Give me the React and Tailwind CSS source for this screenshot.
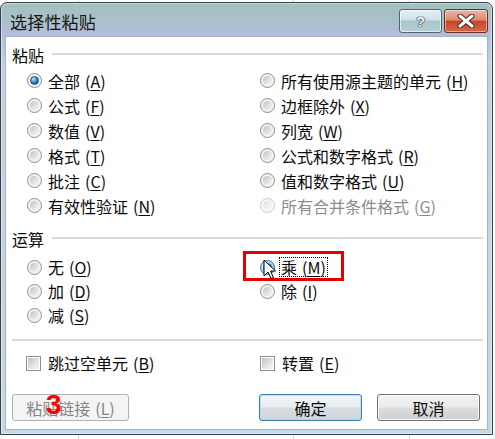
import React from "react";

function Radio({ state = "off" }) {
  if (state === "on") {
    return (
      <span className="w-[15px] h-[15px] shrink-0 rounded-full border border-[#8a8a8a] bg-[#f4f4f4] flex items-center justify-center">
        <span className="w-[9px] h-[9px] rounded-full bg-[radial-gradient(circle_at_35%_30%,#c9ecff_0%,#3d9ae0_40%,#1a5f9e_75%,#0c3760_100%)] border border-[#1d4f7e]" />
      </span>
    );
  }
  if (state === "hover") {
    return (
      <span className="w-[15px] h-[15px] shrink-0 rounded-full border border-[#2b6ea6] bg-[radial-gradient(circle_at_40%_35%,#eaf6ff_0%,#a9d6f3_55%,#4b93c9_100%)] flex items-center justify-center">
        <span className="w-[9px] h-[9px] rounded-full bg-[radial-gradient(circle_at_35%_30%,#8fc6ec_0%,#2d6fa6_55%,#163f66_100%)]" />
      </span>
    );
  }
  if (state === "disabled") {
    return (
      <span className="w-[15px] h-[15px] shrink-0 rounded-full border border-[#c9c9c9] bg-[#f8f8f8] flex items-center justify-center">
        <span className="w-[9px] h-[9px] rounded-full bg-[linear-gradient(135deg,#e2e2e2_0%,#fafafa_100%)]" />
      </span>
    );
  }
  return (
    <span className="w-[15px] h-[15px] shrink-0 rounded-full border border-[#8f8f8f] bg-[#f2f2f2] flex items-center justify-center">
      <span className="w-[9px] h-[9px] rounded-full bg-[linear-gradient(135deg,#bfbfbf_0%,#dcdcdc_45%,#f8f8f8_100%)]" />
    </span>
  );
}

function Check() {
  return (
    <span className="w-[15px] h-[15px] shrink-0 border border-[#8e8f8f] bg-white flex items-center justify-center">
      <span className="w-[11px] h-[11px] bg-[linear-gradient(135deg,#bcc0c6_0%,#dcdde0_45%,#f7f7f7_100%)]" />
    </span>
  );
}

function Key({ k, dim }) {
  return (
    <span className={dim ? "ml-[5px] text-[#8c8c8c]" : "ml-[5px]"}>
      (<span className="underline underline-offset-[2px] decoration-1">{k}</span>)
    </span>
  );
}

function RadioItem({ label, k, state = "off", focus }) {
  const dim = state === "disabled";
  return (
    <div className="flex items-center">
      <Radio state={state} />
      <span
        className={
          focus
            ? "ml-[6px] leading-[16px] outline-1 outline-dotted outline-black outline-offset-[1px] whitespace-nowrap"
            : dim
            ? "ml-[6px] leading-[16px] text-[#8c8c8c] whitespace-nowrap"
            : "ml-[6px] leading-[16px] whitespace-nowrap"
        }
      >
        {label}
        <Key k={k} dim={dim} />
      </span>
    </div>
  );
}

function CheckItem({ label, k }) {
  return (
    <div className="flex items-center">
      <Check />
      <span className="ml-[7px] leading-[16px] whitespace-nowrap">
        {label}
        <Key k={k} />
      </span>
    </div>
  );
}

function Header({ label }) {
  return (
    <div className="flex items-center h-[16px]">
      <span className="leading-[16px]">{label}</span>
      <span className="flex-1 h-[2px] bg-[#dadada] ml-[8px] mt-[-2px]" />
    </div>
  );
}

export default function App() {
  return (
    <div className="w-[495px] h-[439px] bg-white relative overflow-hidden pt-[2px] font-['Noto_Sans_CJK_SC','Noto_Sans',sans-serif] text-[16px] text-[#0a0a0a]">
      {/* background spreadsheet gridlines */}
      <div className="absolute left-[78px] top-0 w-[1px] h-[439px] bg-[#d4d4d4]" />
      <div className="absolute left-[293px] top-0 w-[1px] h-[439px] bg-[#d4d4d4]" />
      <div className="absolute left-[409px] top-0 w-[1px] h-[439px] bg-[#d4d4d4]" />

      {/* window */}
      <div className="relative w-[493px] h-[433px] rounded-t-[7px] border border-[#33414d] bg-[linear-gradient(180deg,#a3c0c3_0px,#a8c2c7_16px,#b2bddd_31px,#c2d0e0_60px,#c8d7e4_100%)] flex flex-col shadow-[inset_0_0_0_1px_rgba(255,255,255,0.45)]">
        {/* title bar */}
        <div className="h-[33px] flex items-start pl-[9px] pr-[4px] shrink-0">
          <span className="mt-[9px] text-[17px] leading-[20px] text-[#161616] tracking-[0.2px]">选择性粘贴</span>
          <div className="ml-auto mt-[6px] flex gap-[2px]">
            <div className="w-[43px] h-[24px] rounded-[3px] border border-[#55636e] bg-[linear-gradient(180deg,#e4eff4_0%,#cfe0e8_45%,#a9c5cc_50%,#b7d0d6_100%)] flex items-center justify-center shadow-[inset_0_0_0_1px_rgba(255,255,255,0.6)]">
              <span className="font-['Liberation_Sans',sans-serif] font-bold text-[15px] leading-none text-[#f4f4f4] [text-shadow:0_0_1px_#222,0_0_1px_#222,0_0_1px_#222]">?</span>
            </div>
            <div className="w-[44px] h-[24px] rounded-[3px] border border-[#6a2e22] bg-[linear-gradient(180deg,#eab7a6_0%,#dd8a70_45%,#c9452a_52%,#d8674a_100%)] flex items-center justify-center shadow-[inset_0_0_0_1px_rgba(255,255,255,0.45)]">
              <svg width="18" height="14" viewBox="0 0 18 14">
                <path d="M3 2 L15 12 M15 2 L3 12" stroke="#3a2a26" strokeWidth="5" strokeLinecap="round" />
                <path d="M3 2 L15 12 M15 2 L3 12" stroke="#ffffff" strokeWidth="3" strokeLinecap="round" />
              </svg>
            </div>
          </div>
        </div>

        {/* client area */}
        <div className="ml-[4px] mr-[4px] h-[394px] bg-white border border-[#a3b4c2] flex flex-col pl-[6px] pr-[4px] pt-[10px]">
          <Header label="粘贴" />
          <div className="grid grid-cols-[233px_1fr] auto-rows-[25px] items-center pl-[15px] mt-[5px]">
            <RadioItem label="全部" k="A" state="on" />
            <RadioItem label="所有使用源主题的单元" k="H" />
            <RadioItem label="公式" k="F" />
            <RadioItem label="边框除外" k="X" />
            <RadioItem label="数值" k="V" />
            <RadioItem label="列宽" k="W" />
            <RadioItem label="格式" k="T" />
            <RadioItem label="公式和数字格式" k="R" />
            <RadioItem label="批注" k="C" />
            <RadioItem label="值和数字格式" k="U" />
            <RadioItem label="有效性验证" k="N" />
            <RadioItem label="所有合并条件格式" k="G" state="disabled" />
          </div>

          <div className="mt-[13px]">
            <Header label="运算" />
          </div>
          <div className="grid grid-cols-[233px_1fr] auto-rows-[24px] items-center pl-[15px] mt-[8px]">
            <RadioItem label="无" k="O" />
            <RadioItem label="乘" k="M" state="hover" focus />
            <RadioItem label="加" k="D" />
            <RadioItem label="除" k="I" />
            <RadioItem label="减" k="S" />
            <div />
          </div>

          <div className="h-[2px] bg-[#dadada] mt-[12px]" />

          <div className="grid grid-cols-[234px_1fr] h-[24px] items-center pl-[14px] mt-[10px]">
            <CheckItem label="跳过空单元" k="B" />
            <CheckItem label="转置" k="E" />
          </div>

          <div className="flex mt-[19px] h-[27px]">
            <div className="w-[117px] h-[27px] rounded-[3px] border border-[#adb2b5] bg-[#f4f4f4] flex items-center justify-center text-[#858585] leading-[16px]">
              粘贴链接<span className="ml-[5px]">(<span className="underline underline-offset-[2px]">L</span>)</span>
            </div>
            <div className="ml-[130px] w-[103px] h-[27px] rounded-[3px] border border-[#3c7fb1] bg-[linear-gradient(180deg,#f3f6f8_0%,#e8edf0_48%,#d6dde2_52%,#cfd7dc_100%)] flex items-center justify-center shadow-[inset_0_0_0_1px_rgba(160,220,250,0.7)] leading-[16px]">
              确定
            </div>
            <div className="ml-[15px] w-[103px] h-[27px] rounded-[3px] border border-[#707070] bg-[linear-gradient(180deg,#f2f2f2_0%,#ebebeb_48%,#dddddd_52%,#cfcfcf_100%)] flex items-center justify-center shadow-[inset_0_0_0_1px_rgba(255,255,255,0.8)] leading-[16px]">
              取消
            </div>
          </div>
        </div>
      </div>

      {/* red annotation rectangle */}
      <div className="absolute left-[243px] top-[251px] w-[101px] h-[30px] border-[3px] border-[#e50000]" />

      {/* mouse cursor */}
      <svg className="absolute left-[263px] top-[259px]" width="14" height="21" viewBox="0 0 14 21">
        <path d="M1 1 L1 17 L5 13 L8 19.5 L10.5 18.5 L7.5 12 L12.5 12 Z" fill="#ffffff" stroke="#000000" strokeWidth="1" strokeLinejoin="round" />
      </svg>

      {/* red step number */}
      <span className="absolute left-[46px] top-[391px] font-['Liberation_Sans',sans-serif] font-bold text-[28px] leading-none text-[#ff0000]">3</span>
    </div>
  );
}
